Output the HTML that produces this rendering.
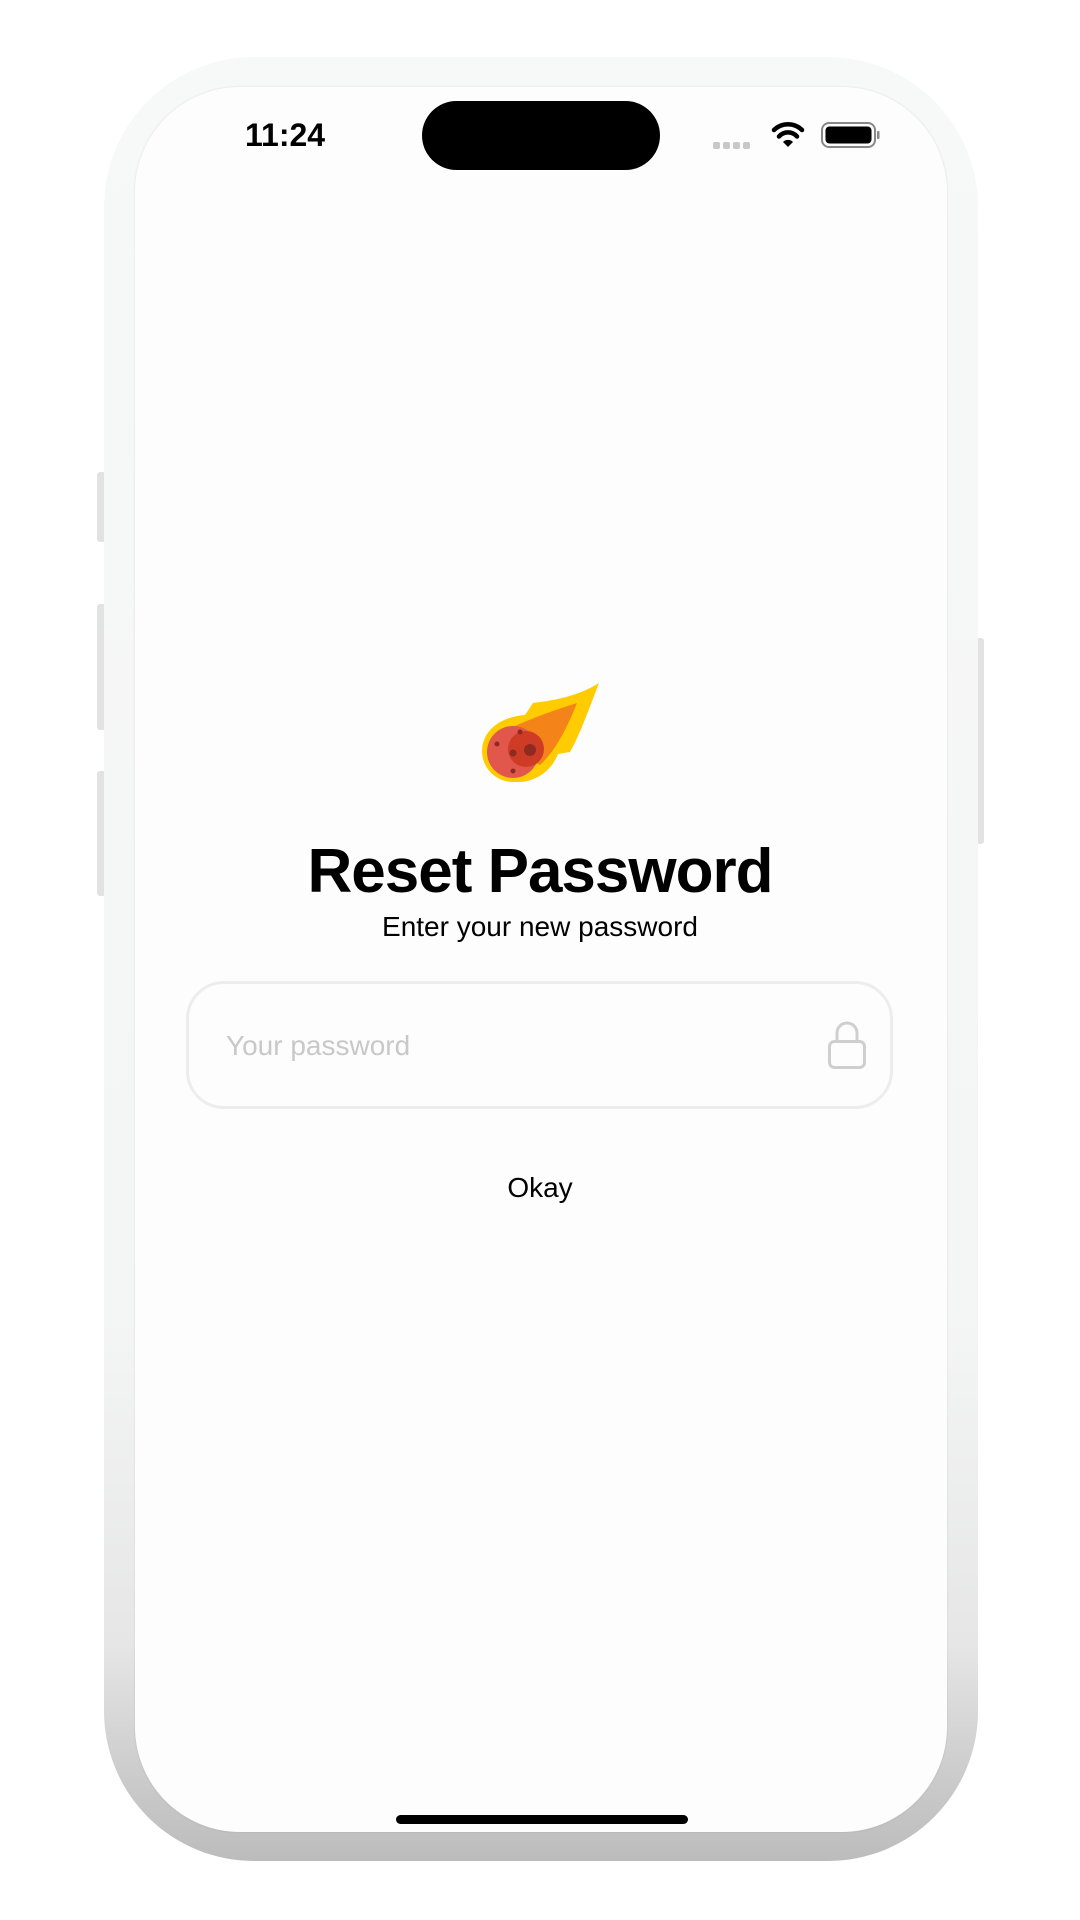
<!DOCTYPE html>
<html><head><meta charset="utf-8"><style>
html,body{margin:0;padding:0;width:1080px;height:1920px;background:#fff;overflow:hidden;font-family:"Liberation Sans",sans-serif}
.abs{position:absolute}
.frame{left:104px;top:57px;width:874px;height:1804px;border-radius:150px;background:linear-gradient(#f7f8f8 0%,#f4f5f5 70%,#e6e6e6 88%,#c9c9c9 96%,#bcbcbc 100%)}
.screen{left:135px;top:87px;width:812px;height:1745px;border-radius:105px;background:#fdfdfd;box-shadow:0 0 2px rgba(0,0,0,0.12)}
.btn{background:#e2e2e2;border-radius:3px}
</style></head><body>
<div class="abs btn" style="left:97px;top:472px;width:9px;height:70px"></div>
<div class="abs btn" style="left:97px;top:604px;width:9px;height:126px"></div>
<div class="abs btn" style="left:97px;top:771px;width:9px;height:125px"></div>
<div class="abs btn" style="left:976px;top:638px;width:8px;height:206px"></div>
<div class="abs frame"></div>
<div class="abs screen"></div>
<div class="abs" style="left:422px;top:101px;width:238px;height:69px;border-radius:35px;background:#000"></div>
<div class="abs" style="left:245px;top:117px;font-size:32px;font-weight:bold;color:#000">11:24</div>
<svg class="abs" style="left:710px;top:118px" width="170" height="34" viewBox="0 0 170 34">
<g fill="#c8c8c8"><rect x="3" y="24" width="7" height="7" rx="2"/><rect x="13" y="24" width="7" height="7" rx="2"/><rect x="23" y="24" width="7" height="7" rx="2"/><rect x="33" y="24" width="7" height="7" rx="2"/></g>
<path d="M64 12 A20 20 0 0 1 92 12" stroke="#000" stroke-width="4.5" fill="none" stroke-linecap="round"/>
<path d="M69 18.5 A12 12 0 0 1 87 18.5" stroke="#000" stroke-width="4.5" fill="none" stroke-linecap="round"/>
<path d="M73 24 L78 29 L83 24 A7 7 0 0 0 73 24Z" fill="#000"/>
<rect x="112" y="5" width="53" height="24" rx="7" fill="none" stroke="#888" stroke-width="2"/>
<rect x="115.5" y="8.5" width="46" height="17" rx="4" fill="#000"/>
<rect x="167" y="13" width="2.5" height="8" rx="1" fill="#888"/>
</svg>
<svg class="abs" style="left:470px;top:670px" width="140" height="125" viewBox="0 0 140 125">
<path d="M129 13 C115 50 108 68 100 82 L88 84 C80 104 62 113 45 112 C25 112 12 95 13 78 C14 60 30 47 55 45 L63 33 C88 30 110 25 129 13Z" fill="#fecc00"/>
<circle cx="43" cy="81" r="31" fill="#fecc00"/>
<path d="M107 33 C97 58 86 80 70 95 L43 82 L45 56 C65 47 85 40 107 33Z" fill="#f48419"/>
<circle cx="43" cy="82" r="26" fill="#e2574c"/>
<circle cx="56" cy="79" r="18" fill="#cf3c26"/>
<g fill="#8e2a20"><circle cx="50" cy="62" r="2.5"/><circle cx="27" cy="74" r="2.5"/><circle cx="43" cy="83" r="3.5"/><circle cx="60" cy="80" r="6"/><circle cx="43" cy="101" r="2.5"/></g>
</svg>
<div class="abs" style="left:0;width:1080px;top:836px;text-align:center;font-size:62px;font-weight:bold;letter-spacing:-1px;color:#000">Reset Password</div>
<div class="abs" style="left:0;width:1080px;top:911px;text-align:center;font-size:28px;color:#000">Enter your new password</div>
<div class="abs" style="left:186px;top:981px;width:701px;height:122px;border:3px solid #ededed;border-radius:38px"></div>
<div class="abs" style="left:226px;top:1030px;font-size:28px;color:#c8c8c8">Your password</div>
<svg class="abs" style="left:826px;top:1019px" width="42" height="52" viewBox="0 0 42 52">
<path d="M11 22 V14 A10 10 0 0 1 31 14 V22" fill="none" stroke="#cfcfcf" stroke-width="3"/>
<rect x="3.5" y="22.5" width="35" height="26" rx="5" fill="none" stroke="#cfcfcf" stroke-width="3"/>
</svg>
<div class="abs" style="left:0;width:1080px;top:1172px;text-align:center;font-size:28px;color:#000">Okay</div>
<div class="abs" style="left:396px;top:1815px;width:292px;height:9px;border-radius:5px;background:#000"></div>
</body></html>
